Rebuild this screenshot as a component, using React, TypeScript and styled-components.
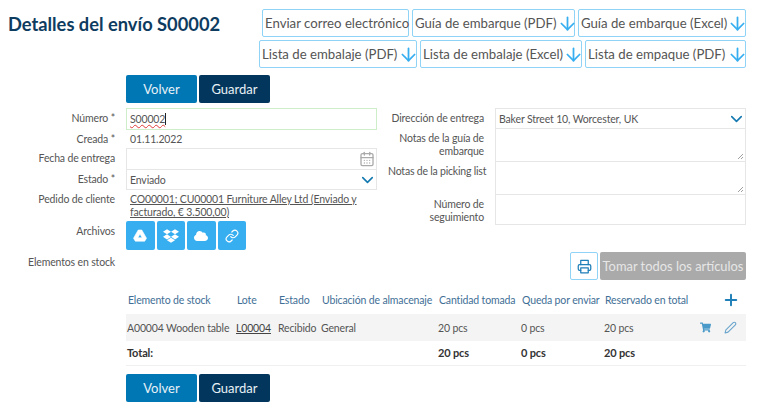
import React from 'react';
import styled, { createGlobalStyle } from 'styled-components';
import { FaCloud, FaDropbox, FaShoppingCart } from 'react-icons/fa';
import { FiArrowDown, FiEdit2, FiLink, FiPlus, FiPrinter } from 'react-icons/fi';
import { LuCalendarDays, LuChevronDown } from 'react-icons/lu';

const GlobalStyle = createGlobalStyle`
  html, body {
    margin: 0;
    background: #fff;
    font-family: "Lato", "Noto Sans", sans-serif;
    color: #555;
  }
  * { box-sizing: border-box; }
`;

const Page = styled.div`
  width: 764px;
  height: 413px;
  padding: 9px 18px 0 8px;
  overflow: hidden;
  letter-spacing: -0.15px;
`;

const Header = styled.div`
  display: flex;
  justify-content: space-between;
  align-items: flex-start;
  height: 66px;
`;

const Title = styled.h1`
  margin: 4px 0 0;
  font-size: 18.3px;
  line-height: 22px;
  font-weight: 700;
  letter-spacing: 0;
  color: #0e3c61;
  white-space: nowrap;
`;

const ExportGroup = styled.div`
  display: flex;
  flex-direction: column;
  align-items: flex-end;
  gap: 3px;
`;

const ExportRow = styled.div`
  display: flex;
  gap: 3px;
`;

const ExportButton = styled.button<{ $w: number }>`
  display: flex;
  align-items: center;
  justify-content: space-between;
  width: ${p => p.$w}px;
  height: 28px;
  padding: 0 0 0 2px;
  border: 1px solid #8fd3f7;
  border-radius: 2px;
  background: #fff;
  color: #555;
  font: 400 13.2px "Lato", sans-serif;
  white-space: nowrap;
  svg { color: #36aef0; font-size: 21px; flex: none; margin-right: -3px; }
`;

const Actions = styled.div`
  display: flex;
  gap: 2px;
  margin: 0 0 0 118px;
`;

const ActionButton = styled.button<{ $dark?: boolean }>`
  width: 71px;
  height: 28px;
  border: 0;
  border-radius: 2px;
  background: ${p => (p.$dark ? '#03365c' : '#0077b5')};
  color: #e8f1f6;
  font: 400 13px "Lato", sans-serif;
`;

const FormGrid = styled.div`
  display: grid;
  grid-template-columns: 369px 1fr;
  column-gap: 11px;
  margin-top: 5px;
`;

const Column = styled.div`
  display: flex;
  flex-direction: column;
`;

const Row = styled.div<{ $h: number; $labelW: number }>`
  display: grid;
  grid-template-columns: ${p => p.$labelW}px 1fr;
  column-gap: 11px;
  height: ${p => p.$h}px;
`;

const Label = styled.div<{ $tight?: boolean }>`
  padding-top: 4px;
  text-align: right;
  font-size: 10.5px;
  line-height: 13px;
  color: #555;
  ${p => p.$tight && 'white-space: nowrap; letter-spacing: -0.2px;'}
`;

const Field = styled.div<{ $active?: boolean }>`
  position: relative;
  display: flex;
  align-items: center;
  height: calc(100% + 1px);
  padding: 0 3px;
  border: 1px solid ${p => (p.$active ? '#cdeec9' : '#e6e6e6')};
  font-size: 10.5px;
  background: #fff;
`;

const Squiggle = styled.span`
  text-decoration: underline wavy #e03b3b 1px;
  text-underline-offset: 1px;
  border-right: 1px solid #222;
`;

const Plain = styled.div`
  padding: 4px 0 0 4px;
  font-size: 10.5px;
  line-height: 13px;
`;

const OrderLink = styled.a`
  display: block;
  padding: 4px 0 0 4px;
  font-size: 10.5px;
  line-height: 13px;
  color: #555;
  text-decoration: underline;
`;

const Resize = styled.svg`
  position: absolute;
  right: 1px;
  bottom: 1px;
`;

const Caret = styled(LuChevronDown)`
  position: absolute;
  right: -1px;
  top: 50%;
  transform: translateY(-50%);
  color: #1479b0;
`;

const CalendarIcon = styled(LuCalendarDays)`
  position: absolute;
  right: 1px;
  top: 50%;
  transform: translateY(-50%);
  color: #aaa;
`;

const FileButtons = styled.div`
  display: flex;
  gap: 2px;
`;

const FileButton = styled.button`
  display: flex;
  align-items: center;
  justify-content: center;
  width: 28.5px;
  height: 29px;
  padding: 0;
  border: 0;
  border-radius: 2px;
  background: #36aef0;
  color: #fff;
  font-size: 14px;
`;

const StockBar = styled.div`
  display: flex;
  justify-content: flex-end;
  gap: 2px;
  margin-top: -20px;
  height: 28px;
`;

const PrintButton = styled.button`
  display: flex;
  align-items: center;
  justify-content: center;
  width: 28px;
  padding: 0;
  border: 1px solid #8fd3f7;
  border-radius: 2px;
  background: #fff;
  color: #1f7fb8;
  font-size: 15px;
`;

const TakeAllButton = styled.button`
  width: 146px;
  padding: 0;
  border: 0;
  border-radius: 2px;
  background: #aaaaaa;
  color: #e6e6e6;
  font: 400 12.9px "Lato", sans-serif;
  white-space: nowrap;
`;

const Table = styled.table`
  width: 620px;
  margin: 5px 0 0 118px;
  table-layout: fixed;
  border-collapse: collapse;
  font-size: 10.5px;
`;

const Th = styled.th`
  height: 29px;
  padding: 0 0 0 2px;
  text-align: left;
  font-weight: 400;
  color: #3f6f96;
  white-space: nowrap;
  svg { color: #1f7fb8; font-size: 18px; stroke-width: 2.6; display: block; margin-left: 21px; }
`;

const BodyRow = styled.tr`
  height: 27px;
  background: #f4f4f4;
`;

const TotalRow = styled.tr`
  height: 24px;
  border-bottom: 1px solid #f0f0f0;
  font-weight: 700;
  font-size: 11px;
  color: #333;
`;

const Td = styled.td`
  padding: 0 0 0 1px;
  white-space: nowrap;
`;

const LotLink = styled.a`
  color: #444;
  text-decoration: underline;
`;

const RowIcons = styled.div`
  display: flex;
  align-items: center;
  gap: 13px;
  color: #4a9ac9;
  font-size: 11px;
  svg:last-child { font-size: 13px; color: #6aa5cc; }
`;

const BottomActions = styled(Actions)`
  margin-top: 8px;
`;

const columns = [109, 42, 43, 117, 83, 83, 96, 47];

const exportsTop = [
  { label: 'Enviar correo electrónico', w: 147, arrow: false },
  { label: 'Guía de embarque (PDF)', w: 163, arrow: true },
  { label: 'Guía de embarque (Excel)', w: 168, arrow: true },
];

const exportsBottom = [
  { label: 'Lista de embalaje (PDF)', w: 158 },
  { label: 'Lista de embalaje (Excel)', w: 162 },
  { label: 'Lista de empaque (PDF)', w: 161 },
];

const ResizeHandle = () => (
  <Resize width="7" height="7" viewBox="0 0 7 7">
    <path d="M1 6 6 1M4 6 6 4" stroke="#888" strokeWidth="0.8" />
  </Resize>
);

// rounded triangle with a small cut-out, the drive glyph from the file buttons
const DriveIcon = () => (
  <svg width="14" height="13" viewBox="0 0 14 13">
    <path
      fillRule="evenodd"
      fill="#fff"
      d="M5.2 1h3.600l4.700 8.200-1.800 3H2.300L.5 9.200zM7 5 4.900 8.700h4.200z"
      stroke="#fff"
      strokeWidth="0.6"
      strokeLinejoin="round"
    />
  </svg>
);

const App: React.FC = () => (
  <Page>
    <GlobalStyle />
    <Header>
      <Title>Detalles del envío S00002</Title>
      <ExportGroup>
        <ExportRow>
          {exportsTop.map(b => (
            <ExportButton key={b.label} $w={b.w}>
              {b.label}
              {b.arrow && <FiArrowDown />}
            </ExportButton>
          ))}
        </ExportRow>
        <ExportRow>
          {exportsBottom.map(b => (
            <ExportButton key={b.label} $w={b.w}>
              {b.label}
              <FiArrowDown />
            </ExportButton>
          ))}
        </ExportRow>
      </ExportGroup>
    </Header>

    <Actions>
      <ActionButton>Volver</ActionButton>
      <ActionButton $dark>Guardar</ActionButton>
    </Actions>

    <FormGrid>
      <Column>
        <Row $h={21} $labelW={107}>
          <Label>Número *</Label>
          <Field $active><Squiggle>S00002</Squiggle></Field>
        </Row>
        <Row $h={19} $labelW={107}>
          <Label>Creada *</Label>
          <Plain>01.11.2022</Plain>
        </Row>
        <Row $h={21} $labelW={107}>
          <Label>Fecha de entrega</Label>
          <Field><CalendarIcon size={16} /></Field>
        </Row>
        <Row $h={20} $labelW={107}>
          <Label>Estado *</Label>
          <Field>Enviado<Caret size={19} /></Field>
        </Row>
        <Row $h={32} $labelW={107}>
          <Label>Pedido de cliente</Label>
          <OrderLink>CO00001; CU00001 Furniture Alley Ltd (Enviado y facturado, € 3.500,00)</OrderLink>
        </Row>
        <Row $h={31} $labelW={107}>
          <Label>Archivos</Label>
          <FileButtons>
            <FileButton><DriveIcon /></FileButton>
            <FileButton><FaDropbox size={16} /></FileButton>
            <FileButton><FaCloud /></FileButton>
            <FileButton><FiLink /></FileButton>
          </FileButtons>
        </Row>
        <Row $h={20} $labelW={107}>
          <Label>Elementos en stock</Label>
          <div />
        </Row>
      </Column>
      <Column>
        <Row $h={20} $labelW={96}>
          <Label>Dirección de entrega</Label>
          <Field>Baker Street 10, Worcester, UK<Caret size={19} /></Field>
        </Row>
        <Row $h={33} $labelW={96}>
          <Label>Notas de la guía de embarque</Label>
          <Field><ResizeHandle /></Field>
        </Row>
        <Row $h={33} $labelW={96}>
          <Label $tight>Notas de la picking list</Label>
          <Field><ResizeHandle /></Field>
        </Row>
        <Row $h={20} $labelW={96}>
          <Label>Número de seguimiento</Label>
          <Field />
        </Row>
      </Column>
    </FormGrid>

    <StockBar>
      <PrintButton><FiPrinter /></PrintButton>
      <TakeAllButton>Tomar todos los artículos</TakeAllButton>
    </StockBar>

    <Table>
      <colgroup>
        {columns.map((w, i) => <col key={i} style={{ width: w }} />)}
      </colgroup>
      <thead>
        <tr>
          <Th>Elemento de stock</Th>
          <Th>Lote</Th>
          <Th>Estado</Th>
          <Th>Ubicación de almacenaje</Th>
          <Th>Cantidad tomada</Th>
          <Th>Queda por enviar</Th>
          <Th>Reservado en total</Th>
          <Th><FiPlus /></Th>
        </tr>
      </thead>
      <tbody>
        <BodyRow>
          <Td>A00004 Wooden table</Td>
          <Td><LotLink>L00004</LotLink></Td>
          <Td>Recibido</Td>
          <Td>General</Td>
          <Td>20 pcs</Td>
          <Td>0 pcs</Td>
          <Td>20 pcs</Td>
          <Td><RowIcons><FaShoppingCart /><FiEdit2 /></RowIcons></Td>
        </BodyRow>
        <TotalRow>
          <Td>Total:</Td>
          <Td />
          <Td />
          <Td />
          <Td>20 pcs</Td>
          <Td>0 pcs</Td>
          <Td>20 pcs</Td>
          <Td />
        </TotalRow>
      </tbody>
    </Table>

    <BottomActions>
      <ActionButton>Volver</ActionButton>
      <ActionButton $dark>Guardar</ActionButton>
    </BottomActions>
  </Page>
);

export default App;
